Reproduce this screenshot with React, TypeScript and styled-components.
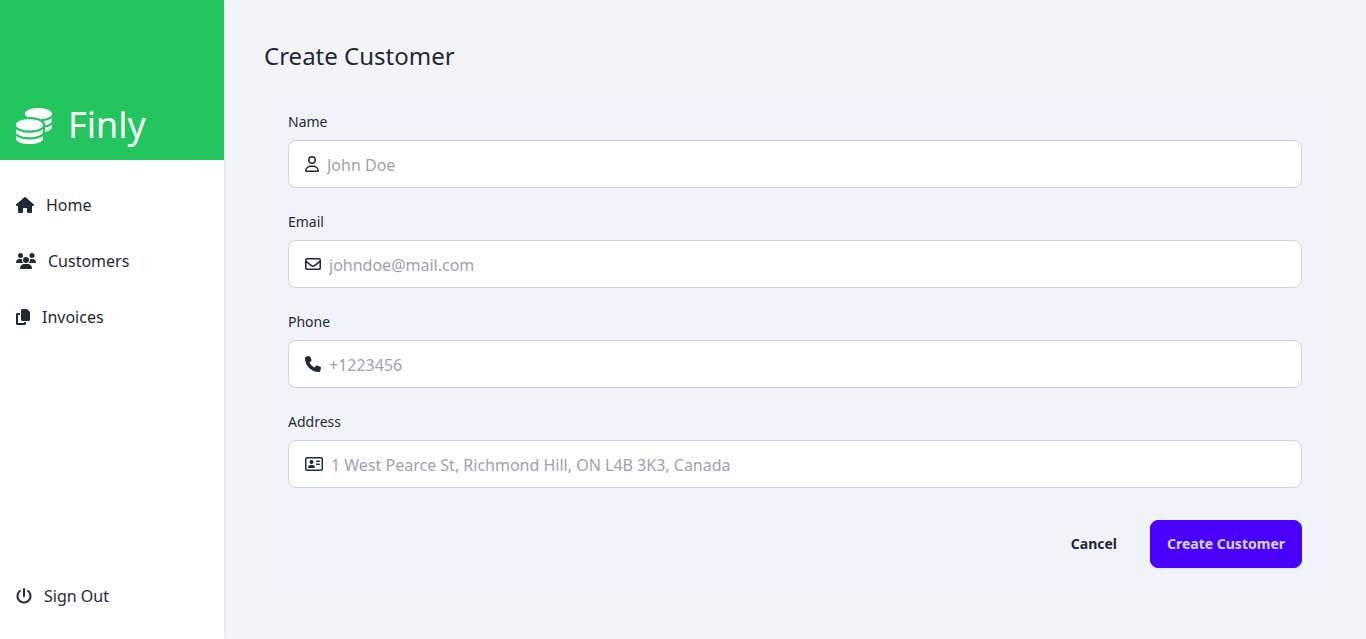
import React from "react";
import styled, { createGlobalStyle, css } from "styled-components";
import {
  FaCoins,
  FaHouse,
  FaUsers,
  FaCopy,
  FaPowerOff,
  FaRegUser,
  FaRegEnvelope,
  FaPhone,
  FaRegAddressCard,
} from "react-icons/fa6";

const GlobalStyle = createGlobalStyle`
  *, *::before, *::after { box-sizing: border-box; }
  body {
    margin: 0;
    background: #f3f4f6;
    color: #1f2937;
    font-family: "Noto Sans", sans-serif;
    font-size: 16px;
    line-height: 24px;
  }
`;

const Page = styled.div`
  display: flex;
  min-height: 100vh;
`;

const Sidebar = styled.aside`
  display: flex;
  flex-direction: column;
  flex: none;
  width: 224px;
  background: #fff;
  box-shadow: 0 4px 6px -1px rgba(0, 0, 0, 0.1), 0 2px 4px -2px rgba(0, 0, 0, 0.1);
`;

const Brand = styled.a`
  display: flex;
  align-items: flex-end;
  gap: 16px;
  height: 160px;
  padding: 0 16px 16px;
  background: #22c55e;
  color: #fff;
  font-size: 36px;
  line-height: 38px;
  text-decoration: none;
`;

const IconSlot = styled.span<{ $width: number }>`
  display: flex;
  flex: none;
  width: ${(p) => p.$width}px;

  svg {
    width: 100%;
    height: 16px;
  }
`;

const Nav = styled.nav`
  display: flex;
  flex: 1;
  flex-direction: column;
  gap: 8px;
  padding: 21px 0 19px;
`;

const navItem = css`
  display: flex;
  align-items: center;
  gap: 12px;
  height: 48px;
  padding: 0 16px;
  border: 0;
  background: none;
  color: inherit;
  font: inherit;
  text-decoration: none;
  cursor: pointer;
`;

const NavLink = styled.a`
  ${navItem}
`;

const SignOut = styled.button`
  ${navItem}
  margin-top: auto;
`;

const Main = styled.main`
  flex: 1;
  min-width: 0;
  padding: 40px;
`;

const Title = styled.h1`
  margin: 0 0 16px;
  font-size: 24px;
  font-weight: 400;
  line-height: 32px;
`;

const Form = styled.form`
  display: flex;
  flex-direction: column;
  gap: 16px;
  padding: 16px 24px 24px;
  background: #f0f4f9;
`;

const Label = styled.label`
  display: block;
  padding: 8px 0;
  font-size: 14px;
  line-height: 20px;
`;

const InputBox = styled.div`
  display: flex;
  align-items: center;
  gap: 8px;
  height: 48px;
  padding: 0 16px;
  border: 1px solid #d2d4d7;
  border-radius: 8px;
  background: #fff;
`;

const Input = styled.input`
  flex: 1;
  min-width: 0;
  padding: 2px 0 0;
  border: 0;
  outline: 0;
  background: none;
  color: inherit;
  font: inherit;

  &::placeholder { color: #9ca3af; opacity: 1; }
`;

const Actions = styled.div`
  display: flex;
  justify-content: flex-end;
  gap: 16px;
  margin-top: 16px;
`;

const Button = styled.button<{ $primary?: boolean }>`
  height: 48px;
  padding: 0 16px;
  border: 1px solid ${(p) => (p.$primary ? "#4a00ff" : "transparent")};
  border-radius: 8px;
  background: ${(p) => (p.$primary ? "#4a00ff" : "transparent")};
  box-shadow: ${(p) => (p.$primary ? "0 1px 2px rgba(0, 0, 0, 0.05)" : "none")};
  color: ${(p) => (p.$primary ? "#d1dbff" : "#1f2937")};
  font: 700 14px/14px "Noto Sans", sans-serif;
  cursor: pointer;
`;

const links = [
  { text: "Home", icon: FaHouse, iconWidth: 18 },
  { text: "Customers", icon: FaUsers, iconWidth: 20 },
  { text: "Invoices", icon: FaCopy, iconWidth: 14 },
];

const fields = [
  { id: "name", label: "Name", type: "text", placeholder: "John Doe", icon: FaRegUser, iconWidth: 14 },
  {
    id: "email",
    label: "Email",
    type: "email",
    placeholder: "johndoe@mail.com",
    icon: FaRegEnvelope,
    iconWidth: 16,
  },
  { id: "phone", label: "Phone", type: "tel", placeholder: "+1223456", icon: FaPhone, iconWidth: 16 },
  {
    id: "address",
    label: "Address",
    type: "text",
    placeholder: "1 West Pearce St, Richmond Hill, ON L4B 3K3, Canada",
    icon: FaRegAddressCard,
    iconWidth: 18,
  },
];

export default function App() {
  return (
    <Page>
      <GlobalStyle />
      <Sidebar>
        <Brand href="#">
          <FaCoins aria-hidden />
          <span>Finly</span>
        </Brand>
        <Nav>
          {links.map(({ text, icon: Icon, iconWidth }) => (
            <NavLink href="#" key={text}>
              <IconSlot $width={iconWidth}>
                <Icon aria-hidden />
              </IconSlot>
              {text}
            </NavLink>
          ))}
          <SignOut type="button">
            <IconSlot $width={16}>
              <FaPowerOff aria-hidden />
            </IconSlot>
            Sign Out
          </SignOut>
        </Nav>
      </Sidebar>
      <Main>
        <Title>Create Customer</Title>
        <Form onSubmit={(e) => e.preventDefault()}>
          {fields.map(({ id, label, type, placeholder, icon: Icon, iconWidth }) => (
            <div key={id}>
              <Label htmlFor={id}>{label}</Label>
              <InputBox>
                <IconSlot $width={iconWidth}>
                  <Icon aria-hidden />
                </IconSlot>
                <Input id={id} type={type} placeholder={placeholder} />
              </InputBox>
            </div>
          ))}
          <Actions>
            <Button type="button">Cancel</Button>
            <Button type="submit" $primary>
              Create Customer
            </Button>
          </Actions>
        </Form>
      </Main>
    </Page>
  );
}
